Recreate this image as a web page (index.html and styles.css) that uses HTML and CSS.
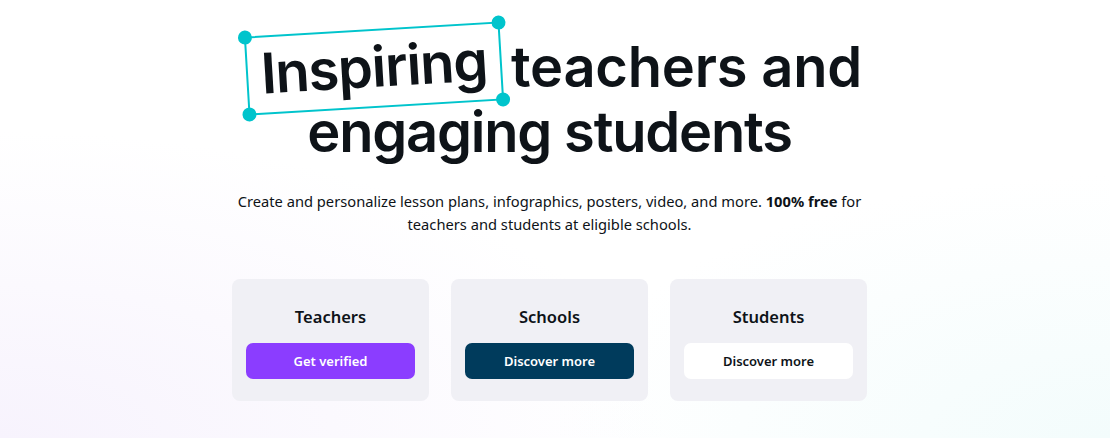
FILE: index.html
```html
<!DOCTYPE html>
<html lang="en">
<head>
<meta charset="utf-8">
<title>Canva for Education</title>
<link rel="stylesheet" href="styles.css">
</head>
<body>
<main class="hero">
  <h1 class="title">
    <span class="line line-one"><span class="highlight">Inspiring<i class="dot tl"></i><i class="dot tr"></i><i class="dot bl"></i><i class="dot br"></i></span> <span class="wide">teachers and</span></span>
    <span class="line">engaging students</span>
  </h1>
  <p class="lead">Create and personalize lesson plans, infographics, posters, video, and more. <strong>100% free</strong> for teachers and students at eligible schools.</p>
  <div class="cards">
    <div class="card">
      <h2 class="card-title">Teachers</h2>
      <a class="btn btn-purple" href="#">Get verified</a>
    </div>
    <div class="card">
      <h2 class="card-title">Schools</h2>
      <a class="btn btn-navy" href="#">Discover more</a>
    </div>
    <div class="card">
      <h2 class="card-title">Students</h2>
      <a class="btn btn-white" href="#">Discover more</a>
    </div>
  </div>
</main>
</body>
</html>
```

FILE: styles.css
```css
html, body {
  margin: 0;
  height: 100%;
}
body {
  font-family: "Noto Sans", "Open Sans", sans-serif;
  color: #0e1318;
  background:
    radial-gradient(ellipse 60% 70% at 0% 100%, #f7f3fd 0%, rgba(247,243,253,0) 100%),
    radial-gradient(ellipse 50% 60% at 100% 100%, #f3fcfc 0%, rgba(243,252,252,0) 100%),
    #ffffff;
  overflow: hidden;
}
.hero {
  display: flex;
  flex-direction: column;
  align-items: center;
  padding: 35px 11px 0 0;
}
.title {
  margin: 0;
  font-family: "Inter", sans-serif;
  font-weight: 600;
  font-size: 56px;
  letter-spacing: -1.2px;
  line-height: 65px;
  text-align: center;
  color: #0e1318;
}
.line {
  display: block;
}
.line-one {
  padding-left: 9px;
}
.wide {
  letter-spacing: -0.2px;
}
.highlight {
  position: relative;
  display: inline-block;
  padding: 4px 13px 6px;
  margin: -6px -4px -8px 0;
  line-height: 65px;
  border: 2px solid #00c4cc;
  transform: rotate(-3.4deg);
}
.dot {
  position: absolute;
  width: 14px;
  height: 14px;
  border-radius: 50%;
  background: #00c4cc;
}
.tl { left: -8px; top: -8px; }
.tr { right: -8px; top: -8px; }
.bl { left: -8px; bottom: -8px; }
.br { right: -8px; bottom: -8px; }
.lead {
  margin: 25px 0 0;
  width: 640px;
  font-size: 14.7px;
  line-height: 23px;
  text-align: center;
  color: #0e1318;
}
.lead strong {
  font-weight: 700;
}
.cards {
  display: flex;
  gap: 22px;
  margin-top: 43px;
}
.card {
  width: 197px;
  height: 122px;
  box-sizing: border-box;
  background: #f0f0f5;
  border-radius: 8px;
  display: flex;
  flex-direction: column;
  align-items: center;
  padding-top: 27px;
}
.card-title {
  margin: 0;
  font-size: 16.5px;
  font-weight: 600;
  line-height: 22px;
}
.btn {
  margin-top: 15px;
  width: 169px;
  height: 36px;
  border-radius: 7px;
  display: flex;
  align-items: center;
  justify-content: center;
  font-size: 13px;
  font-weight: 600;
  text-decoration: none;
}
.btn-purple { background: #8b3dff; color: #fff; }
.btn-navy { background: #003b5c; color: #fff; }
.btn-white { background: #fff; color: #0e1318; }
```
